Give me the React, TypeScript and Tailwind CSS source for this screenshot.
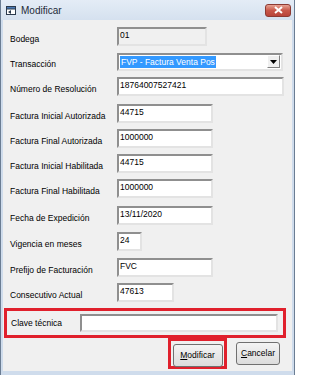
import React from "react";

type Row = {
  label: string;
  value: string;
  width: string;
  mt: string;
  disabled?: boolean;
  combo?: boolean;
};

const rows: Row[] = [
  { label: "Bodega", value: "01", width: "w-[90px]", mt: "mt-[7px]", disabled: true },
  { label: "Transacción", value: "FVP - Factura Venta Pos", width: "w-[166px]", mt: "mt-[6px]", combo: true },
  { label: "Número de Resolución", value: "18764007527421", width: "w-[167px]", mt: "mt-[6px]" },
  { label: "Factura Inicial Autorizada", value: "44715", width: "w-[96px]", mt: "mt-[8px]" },
  { label: "Factura Final Autorizada", value: "1000000", width: "w-[96px]", mt: "mt-[6px]" },
  { label: "Factura Inicial Habilitada", value: "44715", width: "w-[96px]", mt: "mt-[6px]" },
  { label: "Factura Final Habilitada", value: "1000000", width: "w-[96px]", mt: "mt-[6px]" },
  { label: "Fecha de Expedición", value: "13/11/2020", width: "w-[96px]", mt: "mt-[8px]" },
  { label: "Vigencia en meses", value: "24", width: "w-[25px]", mt: "mt-[7px]" },
  { label: "Prefijo de Facturación", value: "FVC", width: "w-[96px]", mt: "mt-[7px]" },
  { label: "Consecutivo Actual", value: "47613", width: "w-[57px]", mt: "mt-[6px]" },
];

const fieldBorder =
  "border-2 border-t-[#8f8f8f] border-l-[#8f8f8f] border-b-[#e3e3e3] border-r-[#e3e3e3]";

const Field = ({ row }: { row: Row }) => {
  if (row.combo) {
    return (
      <div className={`${row.width} h-[18px] ${fieldBorder} bg-white flex items-center`}>
        <div className="flex-1 h-full flex items-center pl-[1px]">
          <span className="bg-[#3399ff] text-white leading-[12px] px-[1px]">{row.value}</span>
        </div>
        <div className="w-[13px] h-[13px] mr-[1px] bg-[#f0f0f0] border border-t-white border-l-white border-b-[#808080] border-r-[#808080] flex items-center justify-center">
          <svg width="7" height="4" viewBox="0 0 7 4">
            <path d="M0 0 H7 L3.5 4 Z" fill="#000" />
          </svg>
        </div>
      </div>
    );
  }
  return (
    <div
      className={`${row.width} h-[19px] ${fieldBorder} ${
        row.disabled ? "bg-[#f0f0f0]" : "bg-white"
      } pl-[1px] pt-[1px] leading-[11px] overflow-hidden whitespace-nowrap`}
    >
      {row.value}
    </div>
  );
};

const App = () => {
  return (
    <div
      className="w-[295px] h-[375px] flex flex-col bg-[#cfdcec] border-l border-r border-[#6b7d93] overflow-hidden text-[8.5px] text-black"
      style={{ fontFamily: '"Liberation Sans", Arial, sans-serif' }}
    >
      {/* title bar */}
      <div className="h-[20px] shrink-0 flex items-center bg-gradient-to-b from-[#e4ecf6] to-[#d5e1ef] pl-[4px] pr-[3px]">
        <svg width="12" height="11" viewBox="0 0 12 11" className="mr-[4px]">
          <rect x="1.5" y="1.5" width="9" height="8" fill="#ffffff" stroke="#2b3a4d" />
          <rect x="1.5" y="1.5" width="9" height="2.5" fill="#4a7ab5" stroke="#2b3a4d" />
          <path d="M3 7 L6 5 L6 9 Z" fill="#2b3a4d" />
        </svg>
        <span className="text-[10px] text-[#1e2a38]">Modificar</span>
        <div className="ml-auto w-[26px] h-[13px] rounded-[3px] border border-[#8c3a33] bg-gradient-to-b from-[#e6a294] via-[#c8574a] to-[#b8443a] flex items-center justify-center">
          <svg width="9" height="8" viewBox="0 0 9 8">
            <path d="M1 1 L8 7 M8 1 L1 7" stroke="#ffffff" strokeWidth="2" />
          </svg>
        </div>
      </div>

      {/* body */}
      <div className="flex-1 mx-[2px] mb-[4px] bg-[#f0f0f0] flex flex-col">
        {rows.map((row) => (
          <div key={row.label} className={`${row.mt} h-[19px] flex items-center`}>
            <div className="w-[114px] pl-[7px] pt-[5px] shrink-0">{row.label}</div>
            <Field row={row} />
          </div>
        ))}

        {/* clave tecnica */}
        <div className="mt-[6px] ml-[1px] w-[282px] h-[30px] border-[3px] border-[#e0202c] flex items-center">
          <div className="w-[73px] pl-[4px] shrink-0">Clave técnica</div>
          <div className={`w-[198px] h-[18px] ${fieldBorder} bg-white`} />
        </div>

        {/* buttons */}
        <div className="flex items-start">
          <div className="ml-[165px] w-[59px] h-[31px] border-[3px] border-[#e0202c] flex items-center justify-center">
            <div className="w-[50px] h-[23px] mt-[3px] rounded-[3px] border border-[#707070] bg-gradient-to-b from-[#f4f4f4] to-[#dcdcdc] flex items-center justify-center">
              <span>
                <span className="underline">M</span>odificar
              </span>
            </div>
          </div>
          <div className="ml-[9px] mt-[4px] w-[44px] h-[23px] rounded-[3px] border border-[#707070] bg-gradient-to-b from-[#f4f4f4] to-[#dcdcdc] flex items-center justify-center">
            <span>
              <span className="underline">C</span>ancelar
            </span>
          </div>
        </div>
      </div>
    </div>
  );
};

export default App;
